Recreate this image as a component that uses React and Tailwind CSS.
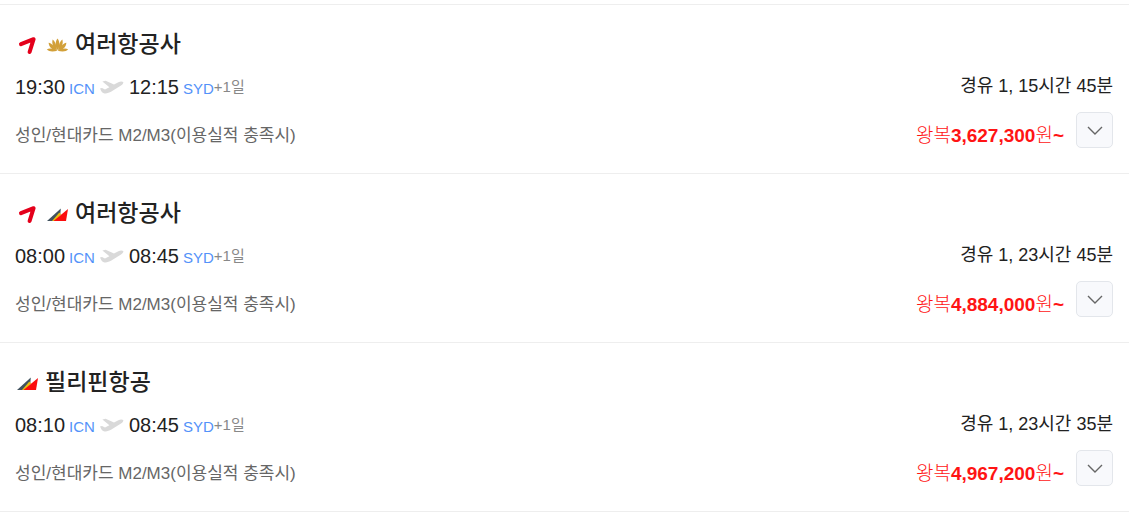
import React from 'react'

const FLIGHTS = [
  {
    id: 1,
    logos: ['asiana', 'lotus'],
    airline: '여러항공사',
    depart: '19:30',
    arrive: '12:15',
    duration: '경유 1, 15시간 45분',
    price: '3,627,300',
  },
  {
    id: 2,
    logos: ['asiana', 'philippine'],
    airline: '여러항공사',
    depart: '08:00',
    arrive: '08:45',
    duration: '경유 1, 23시간 45분',
    price: '4,884,000',
  },
  {
    id: 3,
    logos: ['philippine'],
    airline: '필리핀항공',
    depart: '08:10',
    arrive: '08:45',
    duration: '경유 1, 23시간 35분',
    price: '4,967,200',
  },
]

function AsianaLogo() {
  return (
    <svg width="25" height="25" viewBox="0 0 25 25" fill="none" aria-hidden="true">
      <path
        d="M6 12.2L18.6 7.2L14.6 20"
        stroke="#e4001b"
        strokeWidth="4"
        strokeLinecap="round"
        strokeLinejoin="round"
      />
    </svg>
  )
}

function LotusLogo() {
  return (
    <svg width="25" height="25" viewBox="0 0 25 25" fill="#d2a039" aria-hidden="true">
      <path d="M12.5 6.5C15 10 15 14.5 12.5 18C10 14.5 10 10 12.5 6.5Z" />
      <path d="M7.6 7.6C10.2 9.5 11.7 14 11.9 18.4C8.2 16.5 6.6 12 7.6 7.6Z" />
      <path d="M17.4 7.6C14.8 9.5 13.3 14 13.1 18.4C16.8 16.5 18.4 12 17.4 7.6Z" />
      <path d="M3.6 10.8C7 11.5 9.9 14.5 11.2 18.6C7 18.4 4 14.8 3.6 10.8Z" />
      <path d="M21.4 10.8C18 11.5 15.1 14.5 13.8 18.6C18 18.4 21 14.8 21.4 10.8Z" />
      <path d="M1.8 17.6C4 15.6 8 16.4 12.5 18.7C8 20 4 19.8 1.8 17.6Z" />
      <path d="M23.2 17.6C21 15.6 17 16.4 12.5 18.7C17 20 21 19.8 23.2 17.6Z" />
    </svg>
  )
}

function PhilippineLogo() {
  return (
    <svg width="25" height="25" viewBox="0 0 25 25" aria-hidden="true">
      <path d="M2 20L15.8 7.5L15.2 14L8 20Z" fill="#41525f" />
      <path d="M7 20L14.4 11.5L16 13.5L10 20Z" fill="#e8c010" />
      <path d="M8.5 20L23 8L21 20Z" fill="#fb0d0d" />
    </svg>
  )
}

const LOGOS = {
  asiana: AsianaLogo,
  lotus: LotusLogo,
  philippine: PhilippineLogo,
}

function PlaneIcon() {
  return (
    <svg width="24" height="14" viewBox="0 0 24 14" fill="#d9d9d9" aria-hidden="true">
      <path d="M2.4 1.6L5.6 0.8L14 4.6L18.4 2.2C20.2 1.2 22.4 1.2 23.2 2C23.8 3 22.6 4.6 21 5.6L11.4 11.6C9 13.2 5.6 13.8 3.8 13.2C2.4 12.8 1.6 11.8 1.1 10.8L0 8.6L2 8L5 9.4L9.4 7.2Z" />
    </svg>
  )
}

function FlightItem({ flight }) {
  return (
    <li className="flex justify-between border-b border-[#eeeeee] pt-[23px] pr-4 pb-[25px] pl-[15px]">
      <div>
        <div className="flex h-8 items-center gap-[5px]">
          {flight.logos.map((name) => {
            const Logo = LOGOS[name]
            return <Logo key={name} />
          })}
          <h2 className="text-[23px] leading-8 font-medium text-[#222222]">{flight.airline}</h2>
        </div>

        {/* 출발 / 도착 */}
        <div className="mt-[15px] flex h-6 items-baseline text-[15px] leading-6 text-[#5392f9]">
          <span className="text-xl leading-6 text-[#222222]">{flight.depart}</span>
          <span className="ml-1">ICN</span>
          <span className="mx-[5px] self-center">
            <PlaneIcon />
          </span>
          <span className="text-xl leading-6 text-[#222222]">{flight.arrive}</span>
          <span className="ml-1">SYD</span>
          <span className="self-center text-[#888888]">+1일</span>
        </div>

        <p className="mt-[25px] text-[17px] leading-6 text-[#666666]">
          성인/현대카드 M2/M3(이용실적 충족시)
        </p>
      </div>

      <div className="flex flex-col items-end justify-end">
        <p className="text-lg leading-6 text-[#222222]">{flight.duration}</p>
        <div className="mt-[14px] flex items-center gap-3">
          <p className="pt-3 text-[19px] leading-6 font-light text-[#ff1414]">
            왕복<strong className="font-bold">{flight.price}</strong>원
            <strong className="font-bold">~</strong>
          </p>
          <button
            type="button"
            aria-label="상세보기"
            className="flex h-9 w-[37px] items-center justify-center rounded-[5px] border border-[#e3e6eb] bg-[#f8f9fc]"
          >
            <svg width="16" height="9" viewBox="0 0 16 9" fill="none" aria-hidden="true">
              <path d="M1 1L8 8L15 1" stroke="#666666" strokeWidth="1.4" />
            </svg>
          </button>
        </div>
      </div>
    </li>
  )
}

export default function App() {
  return (
    <main className="bg-white pt-1 font-['Liberation_Sans','Noto_Sans_CJK_KR',sans-serif]">
      <ul className="border-t border-[#eeeeee]">
        {FLIGHTS.map((flight) => (
          <FlightItem key={flight.id} flight={flight} />
        ))}
      </ul>
    </main>
  )
}
